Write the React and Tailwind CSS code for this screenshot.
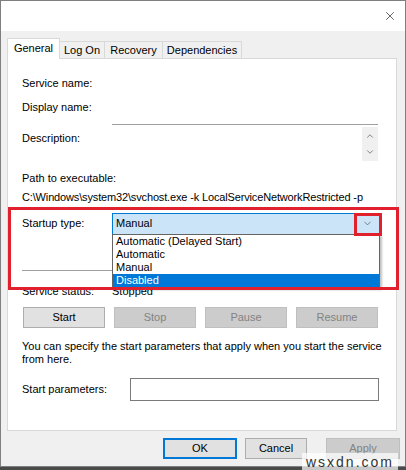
import { X, ChevronUp, ChevronDown } from "lucide-react";

const tabs = [
  { label: "General", w: "w-[53px]", active: true },
  { label: "Log On", w: "w-[45px]" },
  { label: "Recovery", w: "w-[58px]" },
  { label: "Dependencies", w: "w-[79px]" },
];

const options = ["Automatic (Delayed Start)", "Automatic", "Manual", "Disabled"];

function Row({ label, children, labelW = "w-[90px]", className = "" }) {
  return (
    <div className={`flex items-center pl-[14px] ${className}`}>
      <span className={`${labelW} shrink-0`}>{label}</span>
      {children}
    </div>
  );
}

function Btn({ children, disabled, className = "" }) {
  return (
    <button
      className={`h-[21px] border flex items-center justify-center ${
        disabled
          ? "bg-[#cccccc] border-[#bfbfbf] text-[#838383]"
          : "bg-[#e1e1e1] border-[#adadad] text-black"
      } ${className}`}
    >
      {children}
    </button>
  );
}

export default function App() {
  return (
    <div className="relative w-[406px] h-[470px] overflow-hidden bg-[#4a4a4a] text-[11px] leading-none text-black font-['Liberation_Sans',Arial,sans-serif]">
      <div className="h-[467px] border border-[#7f7f7f] bg-[#f0f0f0] flex flex-col">
        {/* title bar */}
        <div className="h-[30px] bg-white flex items-center justify-end pr-[8px]">
          <X size={14} strokeWidth={1.1} className="text-[#111]" />
        </div>

        {/* tab strip */}
        <div className="relative z-10 flex items-end pl-[6px] pt-[7px] -mb-px">
          {tabs.map((t) =>
            t.active ? (
              <div
                key={t.label}
                className={`${t.w} h-[21px] bg-white border-t border-x border-[#d9d9d9] flex items-center justify-center pb-[2px]`}
              >
                {t.label}
              </div>
            ) : (
              <div
                key={t.label}
                className={`${t.w} h-[17px] mb-px bg-[#f0f0f0] border-t border-r border-[#d9d9d9] flex items-center justify-center`}
              >
                {t.label}
              </div>
            )
          )}
        </div>

        {/* General page */}
        <div className="ml-[6px] w-[390px] h-[373px] bg-white border border-[#d9d9d9] flex flex-col">
          <Row label="Service name:" className="h-[16px] mt-[16px]" />
          <Row label="Display name:" className="h-[16px] mt-[8px]" />

          <div className="flex pl-[14px] mt-[9px] h-[37px]">
            <span className="w-[90px] shrink-0 pt-[9px]">Description:</span>
            <div className="w-[266px] border-t border-[#a0a0a0] flex justify-end">
              <div className="w-[16px] h-[34px] mt-[2px] bg-[#f0f0f0] flex flex-col items-center justify-center gap-[6px] text-[#6d6d6d]">
                <ChevronUp size={10} strokeWidth={2} />
                <ChevronDown size={10} strokeWidth={2} />
              </div>
            </div>
          </div>

          <div className="pl-[14px] h-[16px] mt-[9px] flex items-center">Path to executable:</div>
          <div className="pl-[14px] h-[16px] mt-[3px] flex items-center whitespace-nowrap tracking-[-0.15px]">
            C:\Windows\system32\svchost.exe -k LocalServiceNetworkRestricted -p
          </div>

          <Row label="Startup type:" className="h-[21px] mt-[8px]">
            <div className="w-[268px] h-[22px] border border-[#0078d7] bg-[#cce4f7] flex items-center justify-between pl-[3px] pr-[6px]">
              <span>Manual</span>
              <ChevronDown size={11} strokeWidth={1.5} className="text-[#555]" />
            </div>
          </Row>

          <div className="ml-[14px] w-[356px] h-px bg-[#a0a0a0] mt-[36px]" />

          <Row label="Service status:" className="h-[16px] mt-[12px]">
            <span>Stopped</span>
          </Row>

          <div className="flex gap-[9px] pl-[15px] mt-[8px]">
            <Btn className="w-[82px]">Start</Btn>
            <Btn disabled className="w-[82px]">Stop</Btn>
            <Btn disabled className="w-[82px]">Pause</Btn>
            <Btn disabled className="w-[82px]">Resume</Btn>
          </div>

          <p className="pl-[14px] mt-[12px] leading-[13px]">
            You can specify the start parameters that apply when you start the service
            <br />
            from here.
          </p>

          <Row label="Start parameters:" labelW="w-[108px]" className="h-[23px] mt-[12px]">
            <div className="w-[249px] h-[23px] border border-[#7a7a7a] bg-white" />
          </Row>
        </div>

        {/* dialog buttons */}
        <div className="flex mt-[7px] pl-[162px]">
          <button className="w-[74px] h-[21px] bg-[#e1e1e1] border-2 border-[#0078d7] flex items-center justify-center">
            OK
          </button>
          <button className="ml-[8px] w-[62px] h-[21px] bg-[#e1e1e1] border border-[#adadad] flex items-center justify-center">
            Cancel
          </button>
          <button className="ml-[19px] w-[74px] h-[21px] bg-[#cccccc] border border-[#bfbfbf] text-[#838383] flex items-start justify-center pt-[4px]">
            Apply
          </button>
        </div>
      </div>

      {/* open combo list */}
      <ul className="absolute left-[112px] top-[234px] w-[268px] border border-[#646464] bg-white shadow-[2px_2px_2px_rgba(0,0,0,0.25)] leading-[13px]">
        {options.map((o) => (
          <li
            key={o}
            className={`h-[13px] pl-[3px] ${o === "Disabled" ? "bg-[#0078d7] text-white" : ""}`}
          >
            {o}
          </li>
        ))}
      </ul>

      {/* red highlight frames */}
      <div className="absolute left-[8px] top-[207px] w-[391px] h-[83px] border-[3px] border-[#e0202c]" />
      <div className="absolute left-[354px] top-[213px] w-[28px] h-[23px] border-[3px] border-[#e0202c]" />

      <div className="absolute right-[8px] bottom-0 h-[17px] px-[4px] bg-white/70 text-[14px] tracking-[2px] text-[#333] flex items-center">
        wsxdn.com
      </div>
    </div>
  );
}
